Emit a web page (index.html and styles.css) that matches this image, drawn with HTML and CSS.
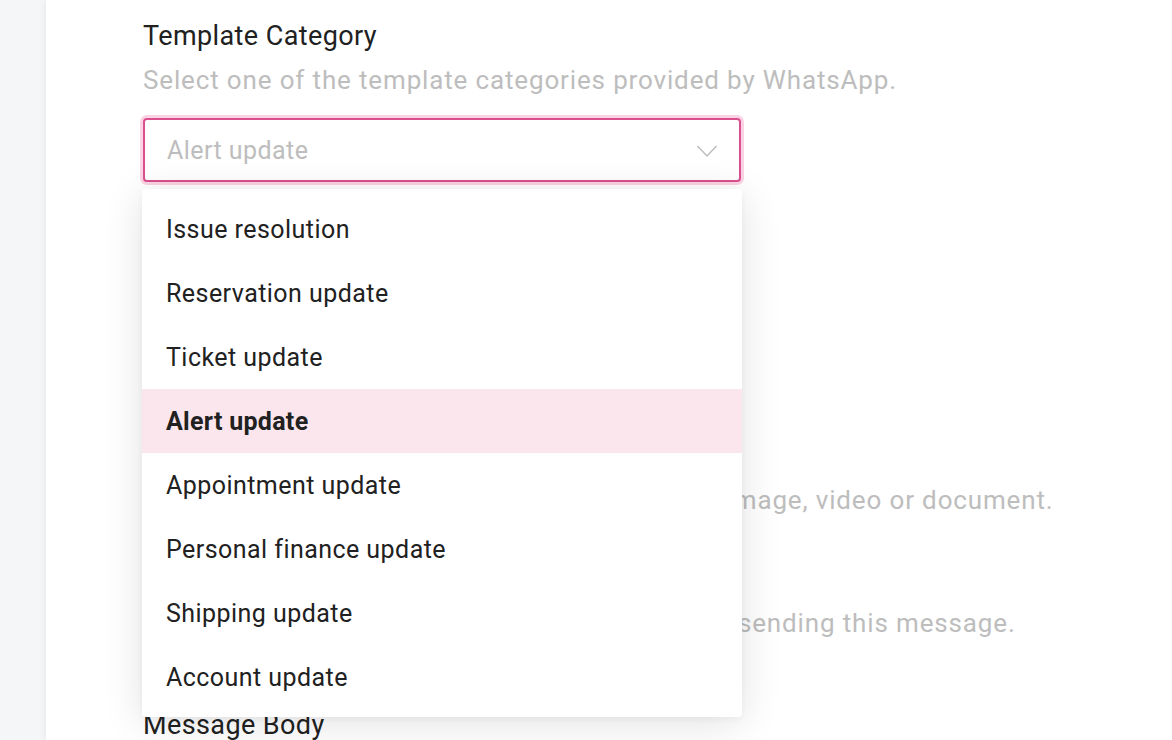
FILE: index.html
```html
<!DOCTYPE html>
<html lang="en">
<head>
<meta charset="utf-8">
<title>Template Category</title>
<link rel="stylesheet" href="styles.css">
</head>
<body>
<div class="app">
  <aside class="sidebar"></aside>
  <main class="panel">
    <form class="form">
      <section class="field field-select">
        <h2 class="label">Template Category</h2>
        <p class="hint">Select one of the template categories provided by WhatsApp.</p>
        <div class="select-wrap">
          <div class="select">
            <span class="select-value">Alert update</span>
            <svg class="chevron" width="22" height="14" viewBox="0 0 22 14" aria-hidden="true">
              <path d="M1.5 2 L11 12 L20.5 2" fill="none" stroke="#bdbdbd" stroke-width="1.5"/>
            </svg>
          </div>
          <ul class="menu">
            <li class="option">Issue resolution</li>
            <li class="option">Reservation update</li>
            <li class="option">Ticket update</li>
            <li class="option selected">Alert update</li>
            <li class="option">Appointment update</li>
            <li class="option">Personal finance update</li>
            <li class="option">Shipping update</li>
            <li class="option">Account update</li>
          </ul>
        </div>
      </section>
      <section class="field field-select">
        <h2 class="label">Template Language</h2>
        <p class="hint">Choose the language of this template.</p>
        <div class="select"><span class="select-value">English</span></div>
      </section>
      <section class="field field-header">
        <h2 class="label">Header</h2>
        <p class="hint">Add an optional header for your message: text, image, video or document.</p>
      </section>
      <section class="field field-footer">
        <h2 class="label">Footer</h2>
        <p class="hint">Add a short line of text to the very bottom when sending this message.</p>
      </section>
      <section class="field">
        <h2 class="label">Message Body</h2>
      </section>
    </form>
  </main>
</div>
</body>
</html>
```

FILE: styles.css
```css
* { box-sizing: border-box; }
html, body {
  margin: 0;
  padding: 0;
  height: 100%;
  overflow: hidden;
}
body {
  font-family: Roboto, "Liberation Sans", Arial, sans-serif;
  color: #212121;
  background: #f5f6f8;
}
.app {
  display: flex;
  height: 740px;
}
.sidebar {
  width: 46px;
  flex: none;
  background: #f5f6f8;
}
.panel {
  flex: 1;
  background: #fff;
  box-shadow: -2px 0 6px rgba(0, 0, 0, 0.05);
  padding-left: 97px;
  position: relative;
  z-index: 1;
}
.form {
  width: 598px;
  padding-top: 18px;
}
.field { margin: 0; }
.field-select { margin-bottom: 46px; }
.field-header { margin-bottom: 41px; }
.field-footer { margin-bottom: 64px; }
.label {
  margin: 0;
  font-size: 27px;
  font-weight: 400;
  line-height: 36px;
  letter-spacing: 0.4px;
  color: #212121;
}
.hint {
  margin: 6px 0 0;
  font-size: 26px;
  line-height: 40px;
  letter-spacing: 0.85px;
  color: #bdbdbd;
  white-space: nowrap;
}
.select-wrap {
  position: relative;
  margin-top: 18px;
}
.field-select > .select { margin-top: 18px; }
.select {
  height: 64px;
  border: 2px solid #d9508c;
  border-radius: 4px;
  box-shadow: 0 0 0 3px #fbd3e4;
  display: flex;
  align-items: center;
  justify-content: space-between;
  padding: 0 21px 0 22px;
  background: #fff;
}
.field-select > .select {
  border-color: #e0e0e0;
  box-shadow: none;
}
.select-value {
  font-size: 25px;
  letter-spacing: 0.45px;
  color: #bdbdbd;
}
.chevron { display: block; margin-top: 2px; }
.menu {
  position: absolute;
  left: -1px;
  top: 71px;
  width: 600px;
  margin: 0;
  padding: 8px 0;
  list-style: none;
  background: #fff;
  border-radius: 4px;
  box-shadow: 0 6px 40px rgba(0, 0, 0, 0.12), 0 2px 6px rgba(0, 0, 0, 0.04);
  z-index: 5;
}
.option {
  height: 64px;
  display: flex;
  align-items: center;
  padding-left: 24px;
  font-size: 25px;
  letter-spacing: 0.45px;
  color: #212121;
}
.option.selected {
  background: #fbe6ed;
  font-weight: 700;
  letter-spacing: 0.3px;
}
```
